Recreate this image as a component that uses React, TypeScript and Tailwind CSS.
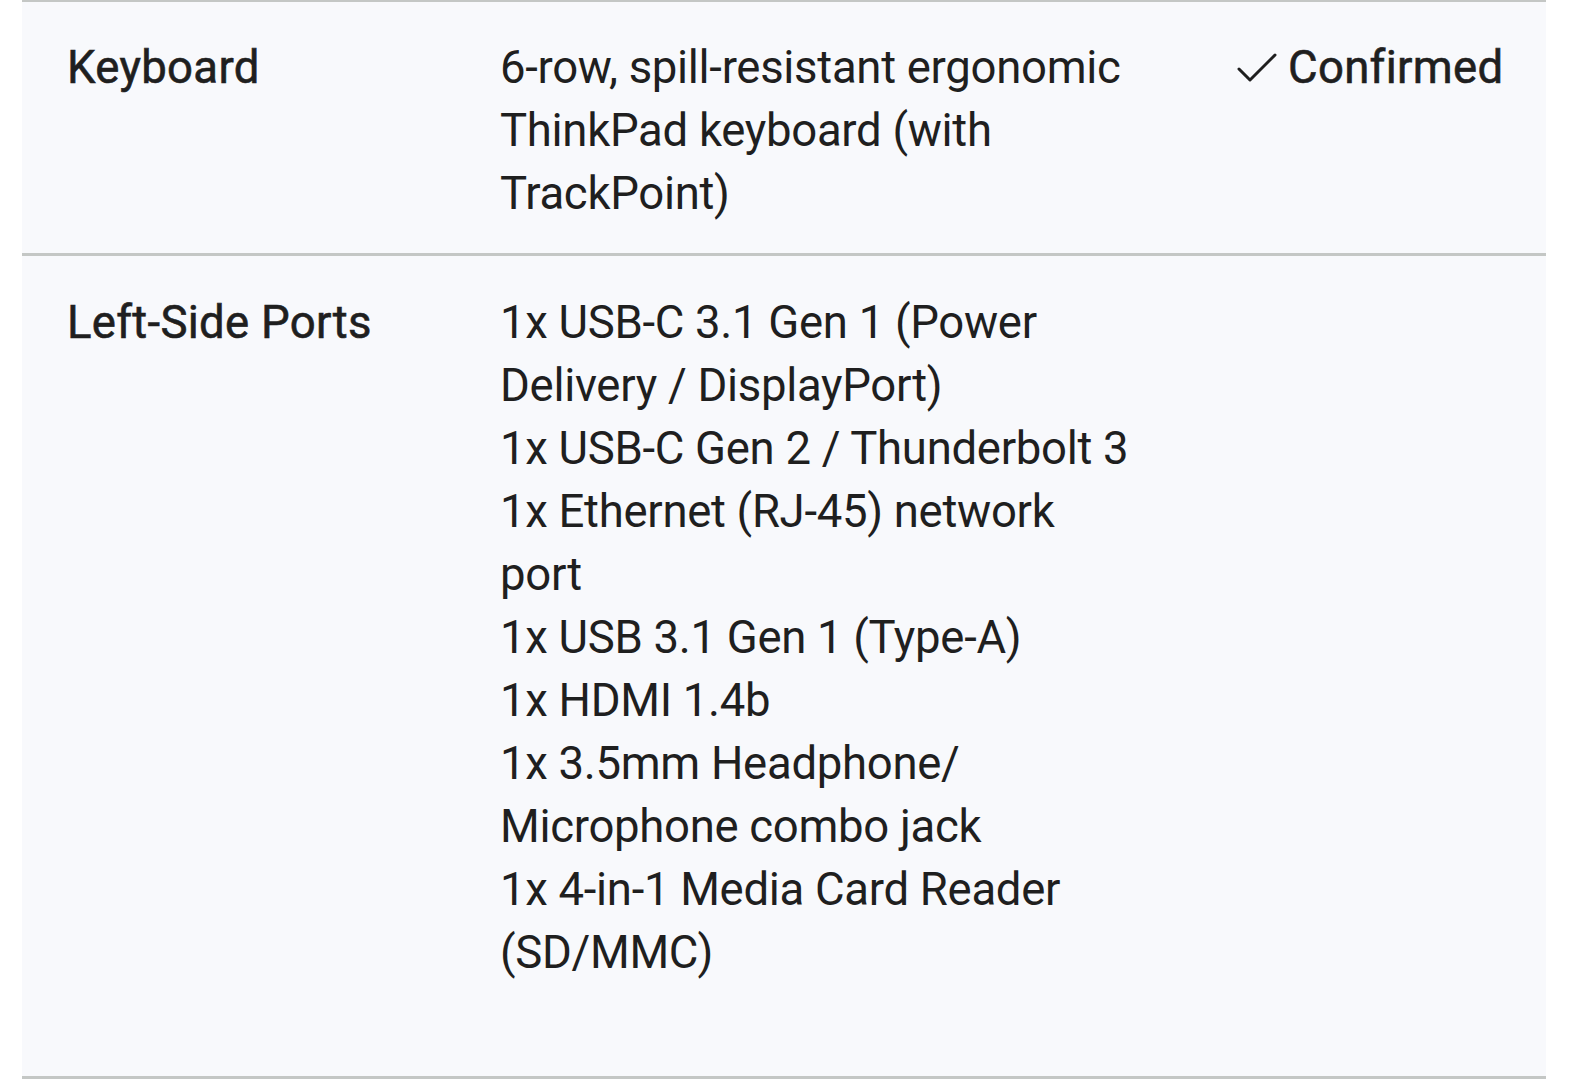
import React from "react";

function Check() {
  return (
    <svg width="42" height="32" viewBox="0 0 42 32" className="shrink-0 mr-[11px]" fill="none">
      <polyline points="4,17 15,28 40,3" stroke="#1f1f1f" strokeWidth="3" strokeLinecap="round" strokeLinejoin="round" />
    </svg>
  );
}

export default function App() {
  const ports = [
    "1x USB-C 3.1 Gen 1 (Power Delivery / DisplayPort)",
    "1x USB-C Gen 2 / Thunderbolt 3",
    "1x Ethernet (RJ-45) network port",
    "1x USB 3.1 Gen 1 (Type-A)",
    "1x HDMI 1.4b",
    "1x 3.5mm Headphone/ Microphone combo jack",
    "1x 4-in-1 Media Card Reader (SD/MMC)",
  ];
  return (
    <div
      className="w-[1571px] h-[1080px] bg-white text-[#1f1f1f] overflow-hidden"
      style={{ fontFamily: "Roboto, 'Noto Sans', sans-serif" }}
    >
      <div className="ml-[22px] w-[1524px] bg-[#f8f9fc] border-t-[2px] border-b-[3px] border-[#c4c7c5] text-[45.5px] leading-[63px]">
        <div className="grid grid-cols-[478px_735px_1fr] h-[251px] pt-[34px]">
          <div className="pl-[45px] tracking-[0.3px] [-webkit-text-stroke:0.6px_#1f1f1f]">Keyboard</div>
          <div className="w-[640px] tracking-[-0.3px]">6-row, spill-resistant ergonomic ThinkPad keyboard (with TrackPoint)</div>
          <div className="flex items-center h-[63px] whitespace-nowrap tracking-[0.3px] [-webkit-text-stroke:0.6px_#1f1f1f]">
            <Check />
            Confirmed
          </div>
        </div>
        <div className="border-t-[3px] border-[#c4c7c5]"></div>
        <div className="grid grid-cols-[478px_735px_1fr] h-[820px] pt-[35px]">
          <div className="pl-[45px] tracking-[0.3px] [-webkit-text-stroke:0.6px_#1f1f1f]">Left-Side Ports</div>
          <div className="w-[640px] tracking-[-0.3px]">
            {ports.map((p) => (
              <div key={p}>{p}</div>
            ))}
          </div>
          <div></div>
        </div>
      </div>
    </div>
  );
}
